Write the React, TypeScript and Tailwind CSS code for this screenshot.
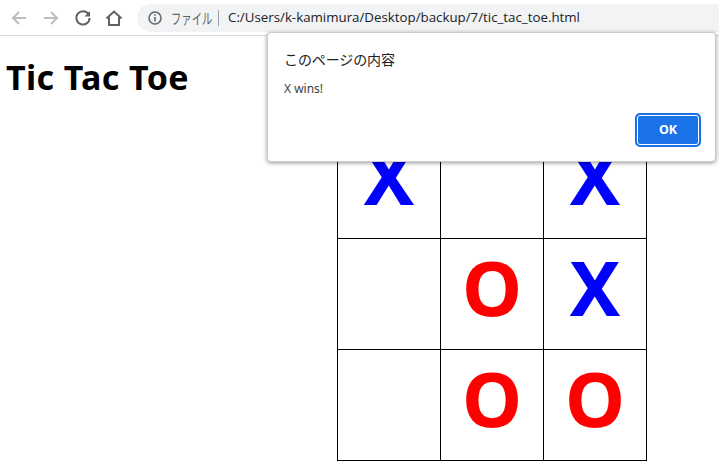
const Cell = ({ v }: { v?: "X" | "O" }) => (
  <div className={`flex items-center justify-center border-r border-b border-black pb-[15px] text-[76px] font-bold leading-none ${v === "X" ? "text-[#0000ff]" : "text-[#ff0000]"}`}>
    {v}
  </div>
);

const board: ("X" | "O" | undefined)[] = ["X", undefined, "X", undefined, "O", "X", undefined, "O", "O"];

export default function App() {
  return (
    <div className="relative h-[470px] w-[719px] overflow-hidden bg-white font-['Noto_Sans','Noto_Sans_CJK_JP',sans-serif]">
      <div className="flex h-9 items-center border-b border-[#d6d7d9] bg-white">
        <svg className="ml-[10px]" width="18" height="18" viewBox="0 0 18 18" fill="none" stroke="#bcbdbf" strokeWidth="2"><path d="M16 9H3M9 3 3 9l6 6" /></svg>
        <svg className="ml-[14px]" width="18" height="18" viewBox="0 0 18 18" fill="none" stroke="#bcbdbf" strokeWidth="2"><path d="M2 9h13M9 3l6 6-6 6" /></svg>
        <svg className="ml-[14px]" width="18" height="18" viewBox="0 0 18 18" fill="none"><path d="M14.6 5.4A6.6 6.6 0 1 0 15.6 9" stroke="#5f6368" strokeWidth="2" /><path d="M16 2v5.5h-5.5z" fill="#5f6368" /></svg>
        <svg className="ml-[13px]" width="18" height="18" viewBox="0 0 18 18" fill="none" stroke="#5f6368" strokeWidth="2"><path d="M1.5 9.5 9 2.5l7.5 7M4 8v8h10V8" /></svg>
        <div className="ml-[14px] flex h-7 flex-1 items-center rounded-l-full bg-[#f1f3f4] pl-[10px]">
          <svg width="16" height="16" viewBox="0 0 16 16" fill="none" stroke="#5f6368" strokeWidth="1.5"><circle cx="8" cy="8" r="6" /><path d="M8 7v4.5M8 4.2v1.6" /></svg>
          <div className="ml-[8px] w-[40px]">
            <span className="inline-block origin-left scale-x-[0.69] whitespace-nowrap text-[15px] leading-none text-[#5f6368]">ファイル</span>
          </div>
          <div className="ml-[7px] h-4 w-px bg-[#9aa0a6]" />
          <span className="ml-[9px] font-['Open_Sans',sans-serif] text-[13.3px] leading-none text-[#202124]">C:/Users/k-kamimura/Desktop/backup/7/tic_tac_toe.html</span>
        </div>
      </div>
      <div className="flex items-start">
        <h1 className="ml-[6px] mt-[22px] text-[34px] font-bold leading-[38px] tracking-[0.4px] text-black">Tic Tac Toe</h1>
        <div className="ml-auto mr-[72px] mt-[91px] grid grid-cols-[103px_103px_103px] grid-rows-[111px_111px_111px] border-l border-t border-black">
          {board.map((v, i) => <Cell key={i} v={v} />)}
        </div>
      </div>
      <div className="absolute left-[267px] top-[32px] flex h-[130px] w-[449px] flex-col rounded-[4px] border border-[#ccc] bg-white pl-[16px] pr-[14px] pt-[17px] shadow-[0_1px_4px_rgba(0,0,0,0.4)]">
        <p className="text-[14px] leading-[20px] tracking-[-0.1px] text-[#202124]">このページの内容</p>
        <p className="mt-[11px] text-[12px] leading-[16px] text-[#3c4043]">X wins!</p>
        <div className="mt-auto mb-[14px] flex justify-end">
          <button className="flex h-[34px] w-[66px] items-center justify-center rounded-[5px] border-2 border-[#1a73e8] bg-[#1a73e8] text-[12.5px] font-bold text-white ring-1 ring-inset ring-white">OK</button>
        </div>
      </div>
    </div>
  );
}
